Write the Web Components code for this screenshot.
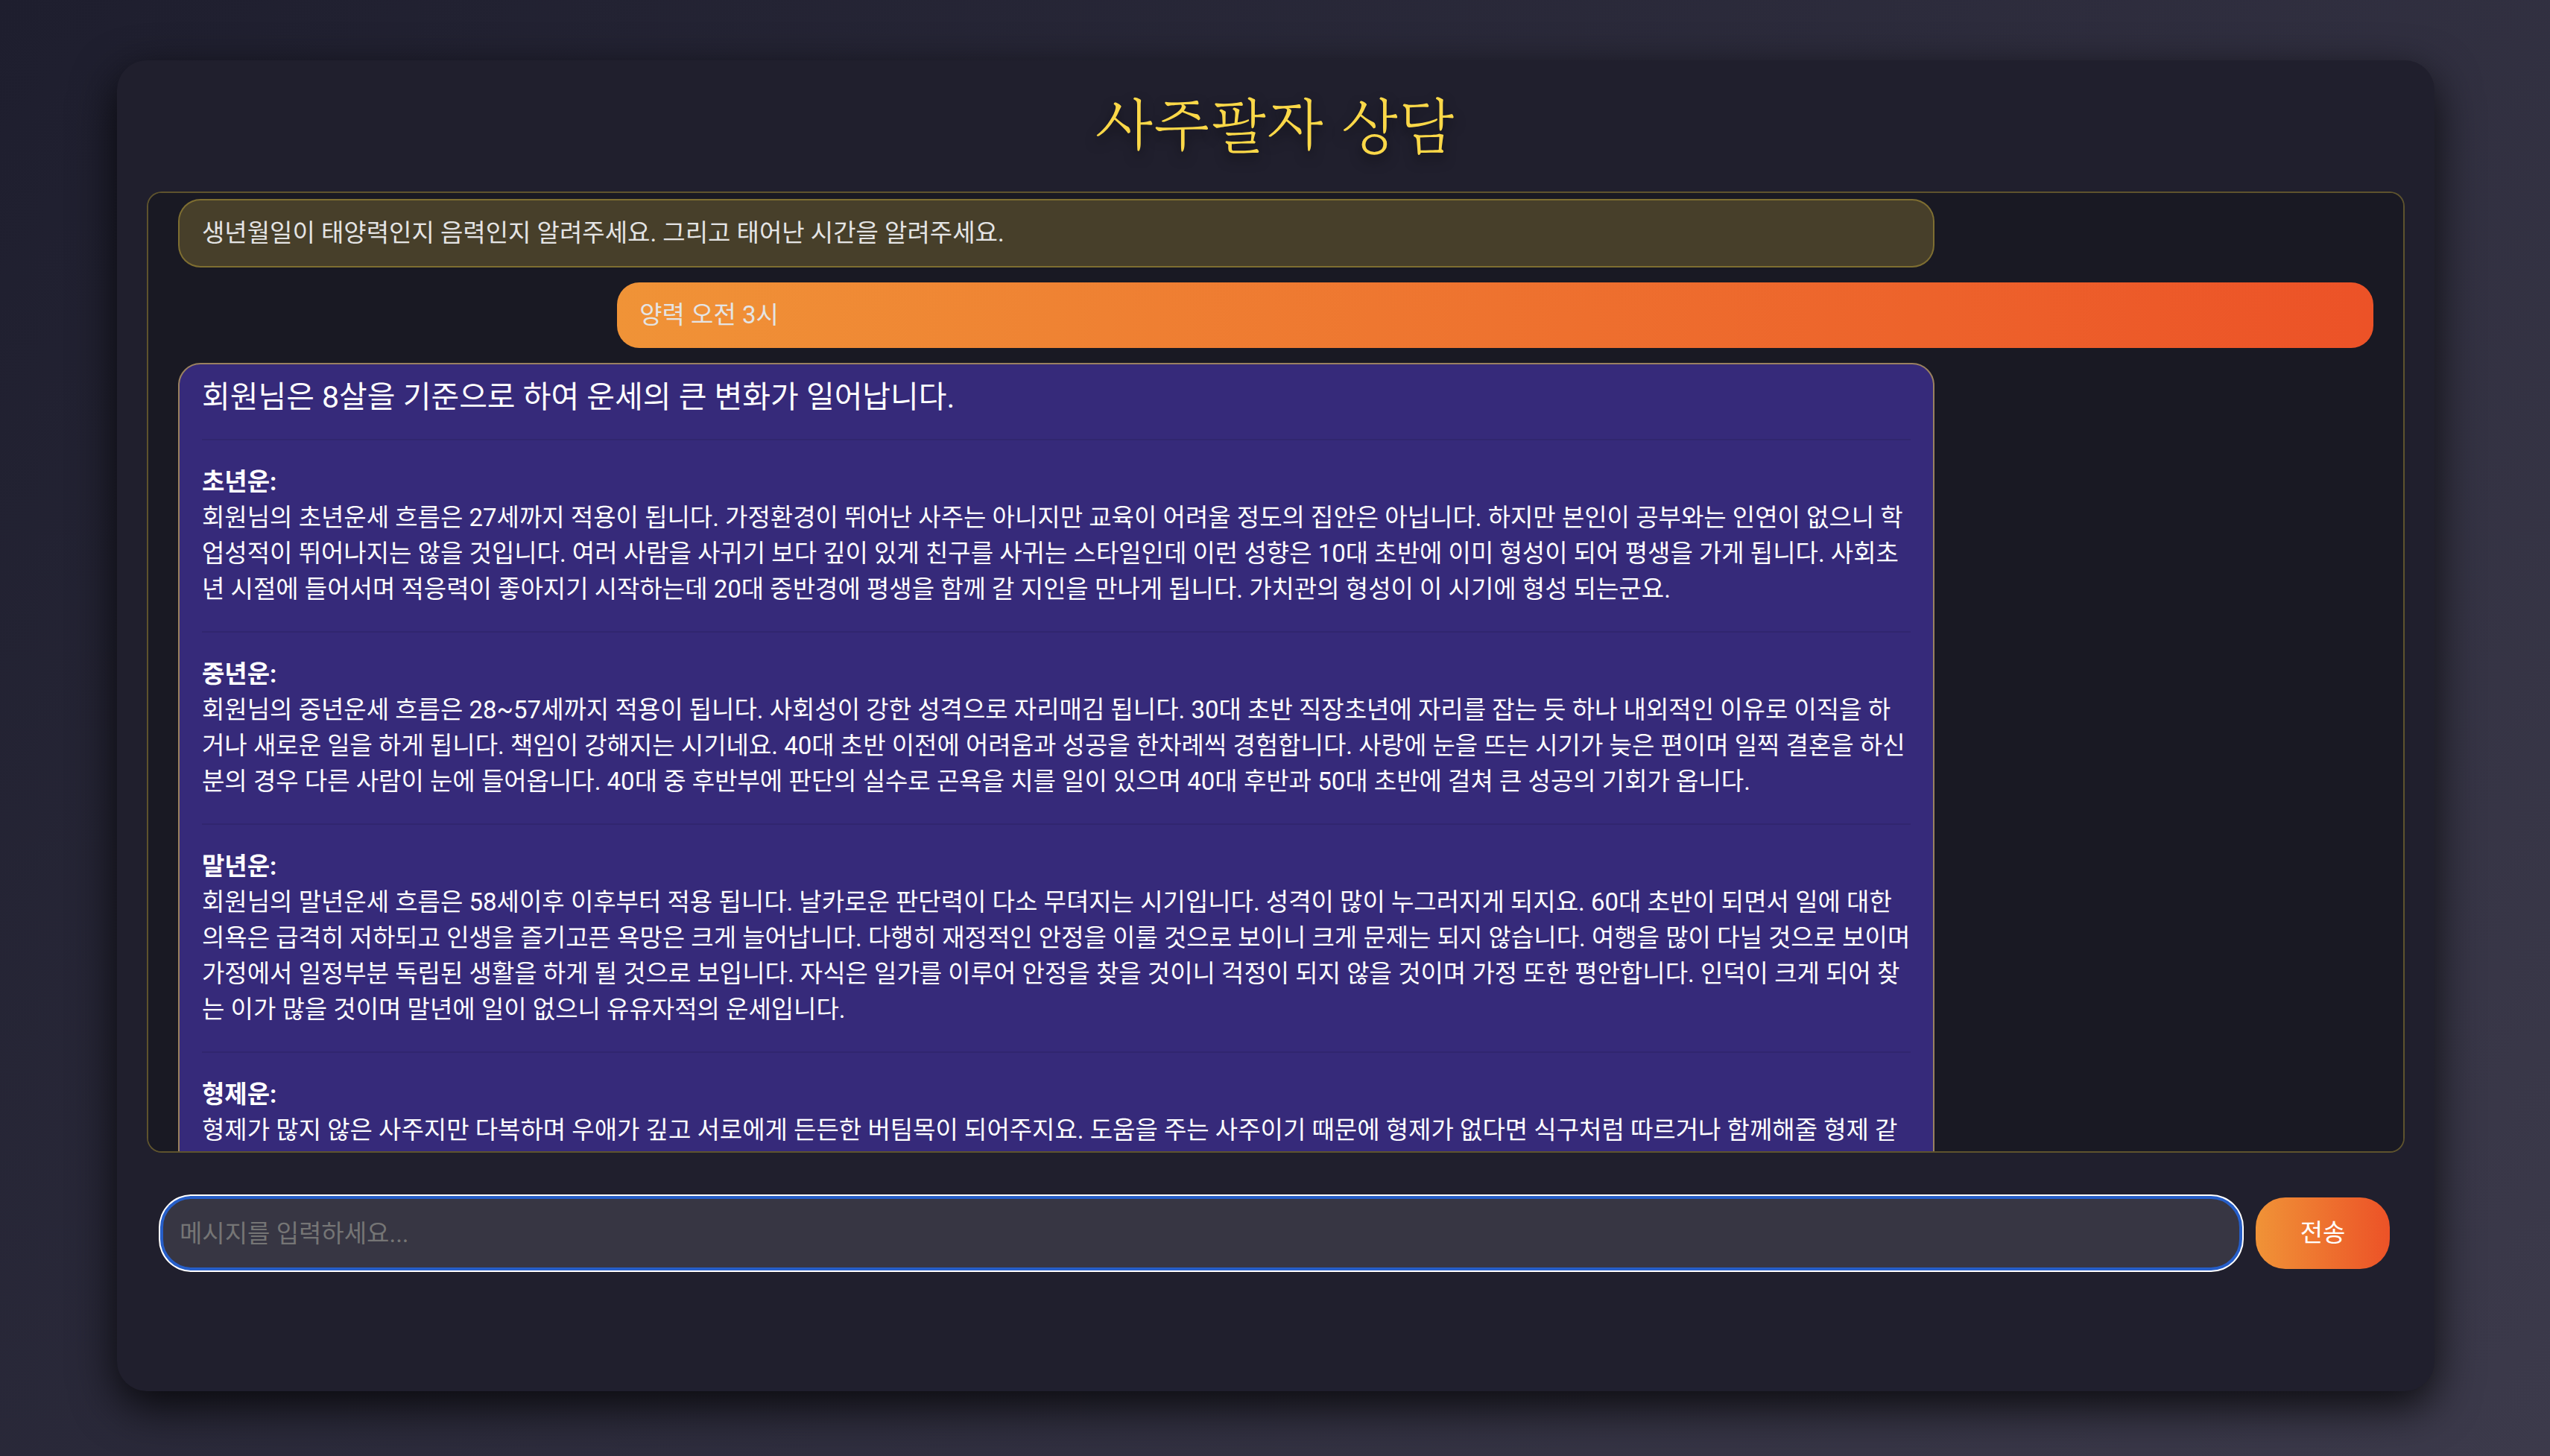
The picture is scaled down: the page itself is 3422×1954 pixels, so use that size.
<!DOCTYPE html>
<html lang="ko">
<head>
<meta charset="utf-8">
<meta name="viewport" content="width=device-width, initial-scale=1">
<title>사주팔자 상담</title>
<style>
  html, body { margin: 0; }
  body {
    min-height: 100vh;
    background: linear-gradient(135deg, #1e1e2e, #3c3a4b);
    font-family: Roboto, "Noto Sans CJK KR", sans-serif;
    font-size: 33px;
    line-height: 48px;
    color: #e4e4e4;
  }
</style>
</head>
<body>
<fortune-app>
  <chat-log>
    <chat-message kind="bot">생년월일이 태양력인지 음력인지 알려주세요. 그리고 태어난 시간을 알려주세요.</chat-message>
    <chat-message kind="user">양력 오전 3시</chat-message>
    <chat-message kind="fortune">
      <fortune-intro>회원님은 8살을 기준으로 하여 운세의 큰 변화가 일어납니다.</fortune-intro>
      <fortune-section heading="초년운:">회원님의 초년운세 흐름은 27세까지 적용이 됩니다. 가정환경이 뛰어난 사주는 아니지만 교육이 어려울 정도의 집안은 아닙니다. 하지만 본인이 공부와는 인연이 없으니 학<br>업성적이 뛰어나지는 않을 것입니다. 여러 사람을 사귀기 보다 깊이 있게 친구를 사귀는 스타일인데 이런 성향은 10대 초반에 이미 형성이 되어 평생을 가게 됩니다. 사회초<br>년 시절에 들어서며 적응력이 좋아지기 시작하는데 20대 중반경에 평생을 함께 갈 지인을 만나게 됩니다. 가치관의 형성이 이 시기에 형성 되는군요.</fortune-section>
      <fortune-section heading="중년운:">회원님의 중년운세 흐름은 28~57세까지 적용이 됩니다. 사회성이 강한 성격으로 자리매김 됩니다. 30대 초반 직장초년에 자리를 잡는 듯 하나 내외적인 이유로 이직을 하<br>거나 새로운 일을 하게 됩니다. 책임이 강해지는 시기네요. 40대 초반 이전에 어려움과 성공을 한차례씩 경험합니다. 사랑에 눈을 뜨는 시기가 늦은 편이며 일찍 결혼을 하신<br>분의 경우 다른 사람이 눈에 들어옵니다. 40대 중 후반부에 판단의 실수로 곤욕을 치를 일이 있으며 40대 후반과 50대 초반에 걸쳐 큰 성공의 기회가 옵니다.</fortune-section>
      <fortune-section heading="말년운:">회원님의 말년운세 흐름은 58세이후 이후부터 적용 됩니다. 날카로운 판단력이 다소 무뎌지는 시기입니다. 성격이 많이 누그러지게 되지요. 60대 초반이 되면서 일에 대한<br>의욕은 급격히 저하되고 인생을 즐기고픈 욕망은 크게 늘어납니다. 다행히 재정적인 안정을 이룰 것으로 보이니 크게 문제는 되지 않습니다. 여행을 많이 다닐 것으로 보이며<br>가정에서 일정부분 독립된 생활을 하게 될 것으로 보입니다. 자식은 일가를 이루어 안정을 찾을 것이니 걱정이 되지 않을 것이며 가정 또한 평안합니다. 인덕이 크게 되어 찾<br>는 이가 많을 것이며 말년에 일이 없으니 유유자적의 운세입니다.</fortune-section>
      <fortune-section heading="형제운:">형제가 많지 않은 사주지만 다복하며 우애가 깊고 서로에게 든든한 버팀목이 되어주지요. 도움을 주는 사주이기 때문에 형제가 없다면 식구처럼 따르거나 함께해줄 형제 같</fortune-section>
    </chat-message>
  </chat-log>
  <chat-composer slot="footer"></chat-composer>
</fortune-app>

<script>
  const define = (name, html, setup) => {
    const template = document.createElement('template');
    template.innerHTML = html;
    customElements.define(name, class extends HTMLElement {
      constructor() {
        super();
        this.attachShadow({ mode: 'open' }).append(template.content.cloneNode(true));
      }
      connectedCallback() { if (setup) setup(this, this.shadowRoot); }
    });
  };

  // Page frame: centred card with title, conversation and composer
  define('fortune-app', `
    <style>
      :host { display: flex; box-sizing: border-box; height: 100vh; padding: 81px 155px 87px 157px; }
      main {
        flex: 1; min-width: 0; box-sizing: border-box;
        display: flex; flex-direction: column;
        padding: 40px 40px 164px;
        border-radius: 40px;
        background: #201f2d;
        box-shadow: 0 20px 60px rgba(0, 0, 0, .8);
      }
      h1 {
        margin: 0 0 46px;
        font: 500 82px/90px "Gowun Batang", "Nanum Myeongjo", "Noto Serif CJK KR", "Noto Serif KR", "Noto Sans CJK KR", serif;
        text-align: center;
        color: #fbd848;
        text-shadow: 0 8px 16px rgba(0, 0, 0, .5);
      }
    </style>
    <main>
      <h1>사주팔자 상담</h1>
      <slot></slot>
      <slot name="footer"></slot>
    </main>`);

  define('chat-log', `
    <style>
      :host {
        flex: 1; min-height: 0; box-sizing: border-box;
        display: flex; flex-direction: column; gap: 20px;
        padding: 8px 40px 0;
        border: 2px solid rgba(255, 217, 70, .3);
        border-radius: 20px;
        background: #191923;
        overflow-y: auto;
        scrollbar-width: none;
      }
    </style>
    <slot></slot>`);

  define('chat-message', `
    <style>
      :host {
        flex: none; box-sizing: border-box;
        display: block; width: 80%;
        padding: 20px 30px;
        border-radius: 30px;
      }
      :host([kind="bot"]) {
        border: 2px solid rgba(255, 217, 70, .3);
        background: rgba(255, 217, 70, .2);
      }
      :host([kind="user"]) {
        align-self: flex-end;
        background: linear-gradient(to right, #f09337, #ec5227);
      }
      :host([kind="fortune"]) {
        border: 2px solid #9a8160;
        background: #362a7a;
        color: #fff;
      }
    </style>
    <slot></slot>`);

  define('fortune-intro', `
    <style>
      :host { display: block; margin-bottom: 32px; font-size: 41px; line-height: 48px; }
    </style>
    <slot></slot>`);

  define('fortune-section', `
    <style>
      :host { display: block; margin-bottom: 32px; white-space: nowrap; }
      hr { height: 2px; margin: 0 0 32px; border: 0; background: #31266f; }
      h2, p { margin: 0; font-size: inherit; }
    </style>
    <hr>
    <h2></h2>
    <p><slot></slot></p>`,
    (el, root) => { root.querySelector('h2').textContent = el.getAttribute('heading'); });

  define('chat-composer', `
    <style>
      :host { display: block; margin-top: 40px; }
      form { display: flex; gap: 20px; padding: 0 20px; margin-top: 20px; }
      input, button {
        box-sizing: border-box; height: 96px; margin: 0;
        border-radius: 40px; font: inherit;
      }
      input {
        flex: 1; min-width: 0; padding: 0 22px;
        border: 2px solid #265ec8;
        background: #373643;
        color: #e0e0e0;
        outline: none;
        box-shadow: 0 0 0 2px #265ec8, 0 0 0 4px #fff;
      }
      input::placeholder { color: #757575; opacity: 1; }
      button {
        width: 180px; padding: 0; border: 0; color: #fff; cursor: pointer;
        background: linear-gradient(to right, #f09337, #ec5227);
      }
      :host { display: flow-root; }
    </style>
    <form>
      <input type="text" placeholder="메시지를 입력하세요..." aria-label="메시지">
      <button type="submit">전송</button>
    </form>`,
    (el, root) => root.querySelector('form').addEventListener('submit', e => e.preventDefault()));
</script>
</body>
</html>
